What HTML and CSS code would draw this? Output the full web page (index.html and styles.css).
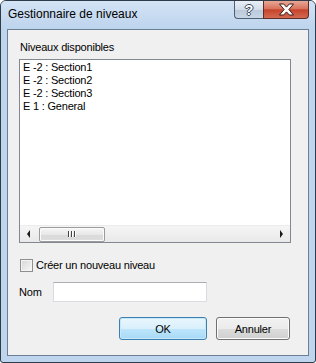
FILE: index.html
```html
<!DOCTYPE html>
<html lang="fr">
<head>
  <meta charset="UTF-8">
  <title>Gestionnaire de niveaux</title>
  <link rel="stylesheet" href="styles.css">
</head>
<body>
  <div class="window">
    <div class="titlebar">
      <span class="title">Gestionnaire de niveaux</span>
      <div class="caption-buttons">
        <div class="cap-btn help"><span>?</span></div>
        <div class="cap-btn close">
          <svg width="17" height="13" viewBox="0 0 17 13">
            <path d="M1.5 1h4.2L8.5 4.1 11.3 1h4.2l-4.6 5.5 4.6 5.5h-4.2L8.5 8.9 5.7 12H1.5l4.6-5.5z" fill="#fff" stroke="#3b1a14" stroke-width="1" stroke-linejoin="round"/>
          </svg>
        </div>
      </div>
    </div>
    <div class="client">
      <div class="caption">Niveaux disponibles</div>
      <div class="listbox">
        <div class="items">
          <div class="item">E -2 : Section1</div>
          <div class="item">E -2 : Section2</div>
          <div class="item">E -2 : Section3</div>
          <div class="item">E 1 : General</div>
        </div>
        <div class="hscroll">
          <div class="arrow left"></div>
          <div class="track">
            <div class="thumb"><span class="grip"></span><span class="grip"></span><span class="grip"></span></div>
          </div>
          <div class="arrow right"></div>
        </div>
      </div>
      <label class="check-row">
        <span class="checkbox"></span>
        <span>Créer un nouveau niveau</span>
      </label>
      <div class="name-row">
        <span class="name-label">Nom</span>
        <div class="textbox"></div>
      </div>
      <div class="buttons">
        <div class="btn default">OK</div>
        <div class="btn">Annuler</div>
      </div>
    </div>
  </div>
</body>
</html>
```
FILE: styles.css
```css
body {
  margin: 0;
  font-family: "Liberation Sans", Arial, sans-serif;
  font-size: 11px;
  color: #000;
}
.window {
  width: 316px;
  height: 363px;
  box-sizing: border-box;
  border: 1px solid #2f3b48;
  border-radius: 6px 6px 3px 3px;
  background: #bfd5ee;
  display: flex;
  flex-direction: column;
  overflow: hidden;
}
.titlebar {
  height: 28px;
  display: flex;
  align-items: flex-start;
  background: linear-gradient(#d3e3f5, #bdd4ed);
}
.title {
  font-size: 12px;
  line-height: 15px;
  padding: 6px 0 0 7px;
  color: #000;
}
.caption-buttons {
  margin-left: auto;
  margin-right: 6px;
  display: flex;
  height: 18px;
}
.cap-btn {
  display: flex;
  align-items: center;
  justify-content: center;
  box-sizing: border-box;
  height: 18px;
  border: 1px solid #4c5f76;
  border-top: none;
}
.cap-btn.help {
  width: 29px;
  border-right: none;
  border-radius: 0 0 0 4px;
  background: linear-gradient(#e9eff6, #d2dde9 50%, #b9c9da 51%, #c8d6e4);
}
.cap-btn.help span {
  font-weight: bold;
  font-size: 14px;
  line-height: 14px;
  color: #fff;
  text-shadow: 1px 0 #3a4b5f, -1px 0 #3a4b5f, 0 1px #3a4b5f, 0 -1px #3a4b5f;
}
.cap-btn.close {
  width: 46px;
  border-radius: 0 0 4px 0;
  border-color: #5e2c24;
  background: linear-gradient(#e7a797, #d8735e 45%, #c5432b 52%, #d46a52);
}
.client {
  flex: 1;
  margin: 0 6px 6px;
  border: 1px solid #6c7e94;
  background: #f0f0f0;
  display: flex;
  flex-direction: column;
  letter-spacing: -0.2px;
}
.caption {
  line-height: 13px;
  margin: 11px 0 0 12px;
}
.listbox {
  margin: 5px 0 0 11px;
  width: 272px;
  height: 184px;
  box-sizing: border-box;
  border: 1px solid #828790;
  background: #fff;
  display: flex;
  flex-direction: column;
}
.items {
  flex: 1;
  padding: 1px 0 0 3px;
}
.item {
  line-height: 13px;
  white-space: nowrap;
}
.hscroll {
  height: 17px;
  display: flex;
  align-items: center;
  background: linear-gradient(#f5f5f5, #e9e9e9);
  border-top: 1px solid #ececec;
  box-sizing: border-box;
}
.arrow {
  width: 17px;
  height: 17px;
  display: flex;
  align-items: center;
  justify-content: center;
}
.arrow::before {
  content: "";
  border-top: 4px solid transparent;
  border-bottom: 4px solid transparent;
}
.arrow.left::before {
  border-right: 3px solid #1a1a1a;
}
.arrow.right::before {
  border-left: 3px solid #1a1a1a;
}
.track {
  flex: 1;
  height: 15px;
  display: flex;
  padding-left: 2px;
}
.thumb {
  width: 66px;
  height: 15px;
  box-sizing: border-box;
  border: 1px solid #9b9b9b;
  border-radius: 2px;
  background: linear-gradient(#f6f6f6, #e8e8e8 50%, #d9d9d9 51%, #dedede);
  box-shadow: inset 0 0 0 1px #fbfbfb;
  display: flex;
  align-items: center;
  justify-content: center;
  gap: 1px;
}
.grip {
  width: 1px;
  height: 6px;
  background: #444;
  border-right: 1px solid #fff;
}
.check-row {
  display: flex;
  align-items: center;
  margin: 16px 0 0 12px;
  height: 13px;
  line-height: 13px;
  gap: 3px;
}
.checkbox {
  width: 13px;
  height: 13px;
  box-sizing: border-box;
  border: 1px solid #8e8f8f;
  background: linear-gradient(135deg, #d6d6d6, #f8f8f8);
  box-shadow: inset 0 0 0 1px #f4f4f4;
}
.name-row {
  display: flex;
  align-items: center;
  margin: 10px 0 0 11px;
}
.name-label {
  width: 34px;
}
.textbox {
  width: 154px;
  height: 20px;
  box-sizing: border-box;
  background: #fff;
  border: 1px solid #d9dbe0;
  border-top-color: #abadb3;
}
.buttons {
  display: flex;
  justify-content: flex-end;
  gap: 9px;
  margin-top: 15px;
  padding-right: 18px;
}
.btn {
  width: 74px;
  height: 23px;
  box-sizing: border-box;
  border: 1px solid #707070;
  border-radius: 3px;
  background: linear-gradient(#f2f2f2, #ebebeb 50%, #dddddd 51%, #cfcfcf);
  box-shadow: inset 0 0 0 1px #fcfcfc;
  display: flex;
  align-items: center;
  justify-content: center;
}
.btn.default {
  width: 88px;
  border-color: #3c7fb1;
  background: linear-gradient(#eaf6fd, #d9f0fc 50%, #bee6fd 51%, #a7d9f5);
  box-shadow: inset 0 0 0 1px #c6e8f8;
}
```
